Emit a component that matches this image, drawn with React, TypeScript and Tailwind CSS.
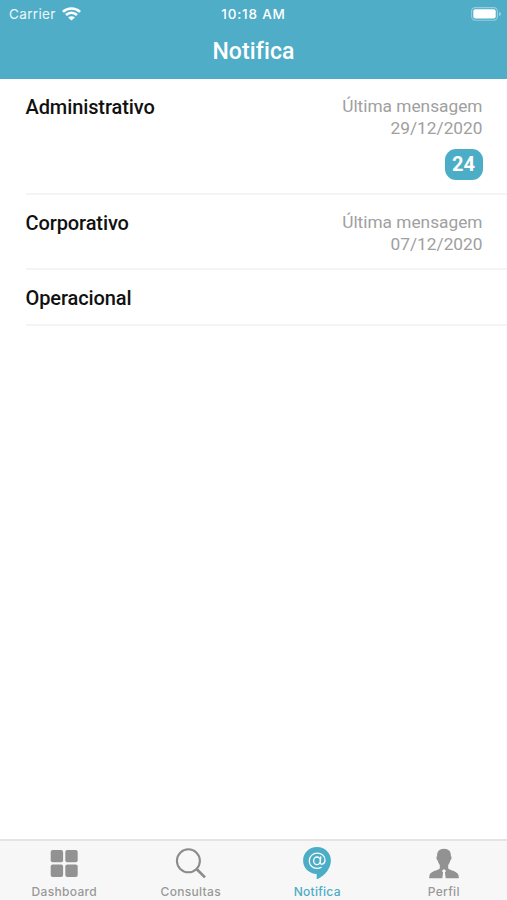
import type { ReactNode } from 'react';

type Message = { name: string; date?: string; unread?: number; height: string };

const messages: Message[] = [
  { name: 'Administrativo', date: '29/12/2020', unread: 24, height: 'h-[116px]' },
  { name: 'Corporativo', date: '07/12/2020', height: 'h-[75px]' },
  { name: 'Operacional', height: 'h-[56px]' },
];

function WifiIcon() {
  return (
    <svg className="ml-[6px] h-[14px] w-[19px]" viewBox="0 0 18 14" preserveAspectRatio="none" fill="none" stroke="#fff" strokeWidth="2.5">
      <path d="M0.9 4.8C5.4 0.4 12.6 0.4 17.1 4.8" />
      <path d="M3.8 8C6.9 5.1 11.1 5.1 14.2 8" />
      <path d="M9 13.6L5.8 10.4C7.6 8.7 10.4 8.7 12.2 10.4Z" fill="#fff" stroke="none" />
    </svg>
  );
}

function BatteryIcon() {
  return (
    <svg className="h-[14px] w-[31px]" viewBox="0 0 31 14">
      <rect x="0.6" y="0.6" width="25.8" height="12.6" rx="3.6" fill="none" stroke="#fff" strokeOpacity="0.4" strokeWidth="1.1" />
      <rect x="2.3" y="2.3" width="22.4" height="9.2" rx="2" fill="#fff" />
      <path d="M28 4.7C30.7 5.5 30.7 8.3 28 9.1Z" fill="#fff" fillOpacity="0.4" />
    </svg>
  );
}

function DashboardIcon() {
  return (
    <svg className="h-8 w-8" viewBox="0 0 32 32" fill="#929292">
      <rect x="2.7" y="2.9" width="12.4" height="12.4" rx="2" />
      <rect x="17.3" y="2.9" width="12.4" height="12.4" rx="2" />
      <rect x="2.7" y="17.5" width="12.4" height="12.4" rx="2" />
      <rect x="17.3" y="17.5" width="12.4" height="12.4" rx="2" />
    </svg>
  );
}

function SearchIcon() {
  return (
    <svg className="h-8 w-8" viewBox="0 0 32 32" fill="none" stroke="#8c8c8c">
      <circle cx="13.4" cy="13.8" r="11.5" strokeWidth="2.1" />
      <path d="M21.8 22.2L30 30.4" strokeWidth="2.7" />
    </svg>
  );
}

function NotificaIcon() {
  return (
    <svg className="h-8 w-8" viewBox="0 0 32 32">
      <path d="M16 0C8 0 2.1 6 2.1 13.5C2.1 21 8 26.7 15.7 27V32.4C23.5 29.3 29.9 21.5 29.9 13.5C29.9 6 24 0 16 0Z" fill="#4badc6" />
      <g fill="none" stroke="#fff" strokeWidth="1.3" strokeLinecap="round">
        <ellipse cx="16" cy="13.8" rx="3.4" ry="3.8" />
        <path d="M19.8 9.9L19.2 15.2C18.9 18.4 23.9 17.8 24 13.2C24.1 9 20.8 6.2 16.3 6.2C11.6 6.2 8.3 9.4 8.3 13.9C8.3 18.4 11.6 21.4 16 21.4C17.7 21.4 19 21 20.1 20.4" />
      </g>
    </svg>
  );
}

function ProfileIcon() {
  return (
    <svg className="h-8 w-8" viewBox="0 0 32 32" fill="#929292">
      <path d="M16 1.8C11.3 1.8 8.8 4.7 9.1 9.3C8 9.5 8.4 12.8 9.8 13.6C10.2 15.6 10.8 16.9 11.8 17.9V21.3C11.2 23.2 2.8 24 1.6 27.8L1.1 31.2H14.3L15.1 25.4L14 23.9L15.2 22.6H16.8L18 23.9L16.9 25.4L17.7 31.2H30.9L30.4 27.8C29.2 24 20.8 23.2 20.2 21.3V17.9C21.2 16.9 21.8 15.6 22.2 13.6C23.6 12.8 24 9.5 22.9 9.3C23.2 4.7 20.7 1.8 16 1.8Z" />
    </svg>
  );
}

function Tab({ icon, label, active }: { icon: ReactNode; label: string; active?: boolean }) {
  return (
    <button className="flex flex-1 flex-col items-center pt-[6px]">
      {icon}
      <span
        className={`mt-[4px] font-['Inter',sans-serif] text-[12px] font-medium leading-[17px] ${
          active ? 'tracking-[0.25px] text-[#4badc6]' : 'tracking-[0.32px] text-[#999999]'
        }`}
      >
        {label}
      </span>
    </button>
  );
}

export default function App() {
  return (
    <div className="flex h-[900px] w-full flex-col overflow-hidden bg-white font-['Roboto',sans-serif]">
      <header className="h-[79px] shrink-0 bg-[#4fadc8] text-white">
        <div className="grid h-[27px] grid-cols-3 items-center font-['Inter',sans-serif] text-[13.5px] leading-[27px]">
          <div className="flex items-center pl-[9px]">
            <span className="pt-px tracking-[0.35px] text-white/90">Carrier</span>
            <WifiIcon />
          </div>
          <div className="pt-px text-center text-[13.5px] font-medium tracking-[0.8px]">10:18 AM</div>
          <div className="flex justify-end pr-[5px]">
            <BatteryIcon />
          </div>
        </div>
        <h1 className="pt-[9px] text-center text-[23px] font-medium leading-[32px] tracking-[0.1px]">Notifica</h1>
      </header>

      <main className="flex-1 pl-[25.5px]">
        {messages.map((m) => (
          <section key={m.name} className={`flex justify-between border-b-2 border-[#f4f4f4] pr-[24.5px] pt-[16px] ${m.height}`}>
            <h2 className="text-[20px] font-medium leading-[24px] tracking-[-0.1px] text-[#111]">{m.name}</h2>
            {m.date && (
              <div className="flex flex-col items-end text-[17.3px] leading-[22.4px] text-[#a0a0a0]">
                <span>Última mensagem</span>
                <span>{m.date}</span>
                {m.unread && (
                  <span className="mt-[9px] flex h-[31px] w-[38px] items-center justify-center rounded-[11px] bg-[#4badc6] text-[20px] font-bold text-white">
                    {m.unread}
                  </span>
                )}
              </div>
            )}
          </section>
        ))}
      </main>

      <nav className="flex h-[61px] shrink-0 border-t-2 border-[#e4e4e4] bg-[#f7f7f7] pl-px">
        <Tab icon={<DashboardIcon />} label="Dashboard" />
        <Tab icon={<SearchIcon />} label="Consultas" />
        <Tab icon={<NotificaIcon />} label="Notifica" active />
        <Tab icon={<ProfileIcon />} label="Perfil" />
      </nav>
    </div>
  );
}
